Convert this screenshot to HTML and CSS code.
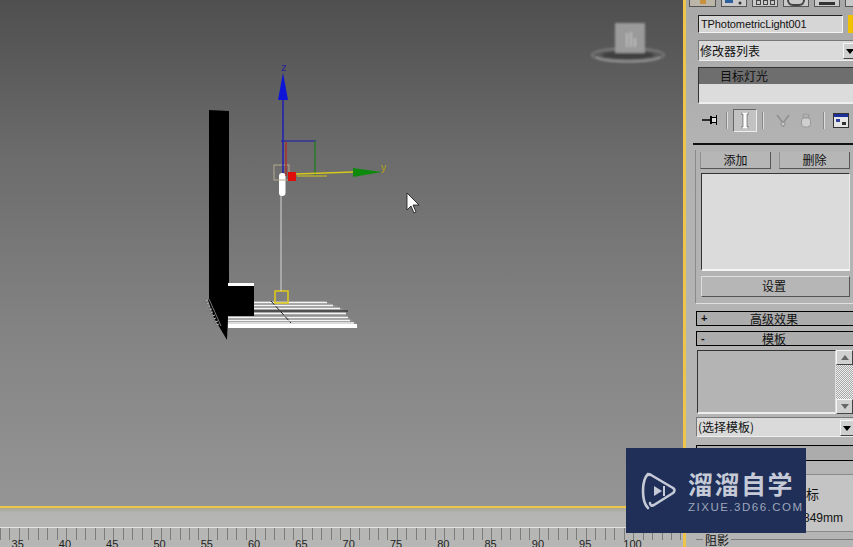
FILE: index.html
```html
<!DOCTYPE html>
<html lang="zh">
<head>
<meta charset="utf-8">
<title>3ds Max</title>
<link rel="stylesheet" href="styles.css">
</head>
<body>
<div class="app">
  <div class="left">
    <main class="viewport">
      <svg class="scene" width="683" height="506" viewBox="0 0 683 506" xmlns="http://www.w3.org/2000/svg">
        <defs><filter id="soft"><feGaussianBlur stdDeviation="0.45"/></filter><filter id="softer"><feGaussianBlur stdDeviation="1"/></filter></defs>
        <g filter="url(#softer)">
          <ellipse cx="628" cy="55" rx="36" ry="6.500" fill="none" stroke="#7f7f7f" stroke-width="1.800"/>
          <path d="M596 57c10 6 54 6 64 0" fill="none" stroke="#a0a0a0" stroke-width="1.500"/>
          <ellipse cx="628" cy="55" rx="26" ry="4" fill="#3f3f3f"/>
          <rect x="615" y="23" width="30" height="30" rx="1" fill="#9a9a9a"/>
          <path d="M627 33v14M631 32v15M635 38v9" stroke="#c4c4c4" stroke-width="1.500" fill="none"/>
        </g>
        <g filter="url(#soft)">
          <path d="M254 301h70l10 4 8 3 6 9 9 7 1 4H228v-12h26z" fill="#8f8f8f"/>
          <g stroke="#f4f4f4" stroke-width="1.600" fill="none">
            <path d="M254 302.500h73M254 305.500h79M254 308.500h86M254 313.500h92"/>
            <path d="M228 317.500h120M228 320.500h122M228 323h126"/>
          </g>
          <path d="M228 326h129" stroke="#fff" stroke-width="4"/>
          <path d="M254 311h94" stroke="#111" stroke-width="1"/>
          <path d="M271 301l20 22" stroke="#222" stroke-width="1" stroke-dasharray="5 2"/>
          <path d="M209 110l20 1v172h25v33h-26l-1 24-13-22-6-18 1-1z" fill="#000"/>
          <rect x="228" y="283" width="26" height="3" fill="#fff"/>
          <path d="M205 301l3-1M206 304l3-1M207 307l3-1M209 310l3-1M210 313l3-1M212 316l3-1M213 319l3-1M215 322l3-1M216 325l3-1" stroke="#b0b0b0" stroke-width="1"/>
          <path d="M205 300l12 27M209 299l12 27" stroke="#777" stroke-width="1"/>
          <rect x="275" y="291" width="13" height="12" fill="none" stroke="#dcc81c" stroke-width="1.600"/>
          <path d="M281 194v97" stroke="#d4d4d4" stroke-width="1"/>
          <rect x="279" y="173" width="6.500" height="23" rx="3.200" fill="#fff"/>
          <rect x="274" y="165" width="15" height="15" fill="none" stroke="#b3a98e" stroke-width="1"/>
          <path d="M283 100v73" stroke="#1010c0" stroke-width="1.300"/>
          <path d="M283 73l-5 27h10z" fill="#0a14d8"/>
          <text x="284" y="71" class="axis axis-z">z</text>
          <path d="M281 141h35" stroke="#1818b0" stroke-width="1.200"/>
          <path d="M315 141v34" stroke="#2a7a2a" stroke-width="1.500"/>
          <path d="M286 142v34" stroke="#b52525" stroke-width="1.300"/>
          <rect x="288" y="172" width="8" height="9" fill="#e01010"/>
          <path d="M296 174l57-2" stroke="#d4c81a" stroke-width="1.400"/>
          <path d="M297 176h30" stroke="#d4c81a" stroke-width="1"/>
          <path d="M353 168l29 4-29 5z" fill="#0f8a0f"/>
          <text x="381" y="171" class="axis axis-y">y</text>
          <path d="M407 193v17l4-4 3 7 2-1-3-7h6z" fill="#fff" stroke="#111" stroke-width="0.800"/>
        </g>
      </svg>
    </main>
    <div class="track-band"></div>
    <div class="ruler">
      <span class="tick-label">35</span><span class="tick-label">40</span><span class="tick-label">45</span><span class="tick-label">50</span><span class="tick-label">55</span><span class="tick-label">60</span><span class="tick-label">65</span><span class="tick-label">70</span><span class="tick-label">75</span><span class="tick-label">80</span><span class="tick-label">85</span><span class="tick-label">90</span><span class="tick-label">95</span><span class="tick-label">100</span>
    </div>
  </div>

  <aside class="panel">
    <div class="tabs">
      <span class="tab tab-a"><i class="dot"></i></span>
      <span class="tab tab-b"><svg width="24" height="7" viewBox="0 0 24 7"><path d="M3 0h8v3H3z" fill="#2b5f9e"/><circle cx="18" cy="3" r="1.500" fill="#333"/></svg></span>
      <span class="tab tab-c"><i class="sq"></i><i class="sq"></i><i class="sq"></i></span>
      <span class="tab tab-d"><i class="ring"></i></span>
      <span class="tab tab-e"><i class="bar"></i></span>
      <span class="tab tab-f"></span>
    </div>

    <div class="name-row">
      <div class="name-input">TPhotometricLight001</div>
      <div class="swatch"></div>
    </div>

    <div class="combo">
      <span>修改器列表</span>
      <span class="combo-btn"><i class="arrow"></i></span>
    </div>

    <div class="stack">
      <div class="stack-sel">目标灯光</div>
    </div>

    <div class="tools">
      <svg class="tool tool-pin" width="18" height="14" viewBox="0 0 18 14"><path d="M1 7h8" stroke="#000" stroke-width="1.500"/><path d="M9 3h2v1h4V2h1v10h-1v-2h-4v1H9z" fill="#000"/><rect x="11" y="5" width="4" height="4" fill="#ddd"/></svg>
      <i class="tool-sep"></i>
      <span class="tool-active"><svg width="8" height="17" viewBox="0 0 8 17"><path d="M0 0h8v2H6v13h2v2H0v-2h2V2H0z" fill="#fff" stroke="#333" stroke-width="0.500"/></svg></span>
      <i class="tool-sep"></i>
      <svg class="tool tool-y" width="16" height="15" viewBox="0 0 16 15"><path d="M2 2l6 8 6-8M8 10v4" fill="none" stroke="#8f8f8f" stroke-width="1.500"/><circle cx="8" cy="11" r="2" fill="#c8c8c8" stroke="#8f8f8f"/></svg>
      <svg class="tool tool-can" width="12" height="15" viewBox="0 0 12 15"><ellipse cx="6" cy="3" rx="3" ry="2" fill="none" stroke="#9a9a9a" stroke-width="1.200"/><rect x="1.500" y="5" width="9" height="9" rx="3" fill="#cfcfcf" stroke="#9a9a9a"/></svg>
      <i class="tool-sep"></i>
      <svg class="tool tool-cfg" width="16" height="15" viewBox="0 0 16 15"><rect x="0.500" y="0.500" width="15" height="14" fill="#e6e6e6" stroke="#333"/><rect x="1" y="1" width="14" height="3" fill="#1c2f9a"/><rect x="3" y="6" width="4" height="3" fill="#2e3f9e"/><rect x="9" y="9" width="4" height="3" fill="#333"/></svg>
    </div>

    <div class="divider"></div>

    <section class="group">
      <div class="btn-row">
        <div class="btn btn-flat">添加</div>
        <div class="btn btn-flat">删除</div>
      </div>
      <div class="listbox"></div>
      <div class="btn btn-setup">设置</div>
    </section>

    <div class="rollout rollout-first"><span class="sign">+</span><span class="roll-title">高级效果</span></div>
    <div class="rollout"><span class="sign">-</span><span class="roll-title">模板</span></div>

    <div class="tpl">
      <div class="tpl-box"></div>
      <div class="scroll">
        <span class="scroll-btn"><i class="up"></i></span>
        <span class="scroll-track"></span>
        <span class="scroll-btn"><i class="down"></i></span>
      </div>
    </div>

    <div class="combo combo-tpl">
      <span>(选择模板)</span>
      <span class="combo-btn"><i class="arrow"></i></span>
    </div>

    <div class="rollout rollout-blank"></div>
    <div class="coord">
      <div class="coord-title">标</div>
      <div class="coord-val">849mm</div>
    </div>
    <div class="shadow-title"><span>阻影</span></div>
  </aside>

  <div class="brand">
    <svg class="brand-icon" width="36" height="38" viewBox="0 0 36 38"><path d="M7 2C3 6 2 12 2 19s1 13 5 17" fill="none" stroke="#c5cad6" stroke-width="2.600" stroke-linecap="round"/><path d="M8 3c0-1 1-1 2 0l22 13c2 1 2 3 0 5L13 33c-2 1-4 1-4-2" fill="none" stroke="#c5cad6" stroke-width="2.600" stroke-linecap="round" stroke-linejoin="round"/><path d="M13 14l8 5-8 5z" fill="#c5cad6"/><path d="M23 14v10" stroke="#c5cad6" stroke-width="2"/></svg>
    <div class="brand-text">
      <div class="brand-cn">溜溜自学</div>
      <div class="brand-en">ZIXUE.3D66.COM</div>
    </div>
  </div>
</div>
</body>
</html>
```

FILE: styles.css
```css
* { box-sizing: border-box; }
html, body { margin: 0; padding: 0; }
body { width: 853px; height: 547px; overflow: hidden; background: #b4b4b4; font-family: "Noto Sans CJK SC", "Liberation Sans", sans-serif; color: #111; }
i { display: block; }

.app { position: relative; display: flex; width: 853px; height: 547px; overflow: hidden; }

.left { width: 683px; flex: none; display: flex; flex-direction: column; }
.viewport { height: 506px; flex: none; background: linear-gradient(180deg, #4f4f4f 0%, #6b6b6b 30%, #838383 65%, #959595 100%); }
.scene { display: block; }
.axis { font-family: "Liberation Sans", sans-serif; font-size: 11px; }
.axis-z { fill: #2020a0; text-anchor: middle; }
.axis-y { fill: #b5a01a; }

.track-band { height: 21px; flex: none; border-top: 2px solid #eec64a; background: linear-gradient(180deg, #a8a795 0%, #b4b4b2 25%, #b6b6b4 100%); }
.ruler { height: 20px; flex: none; border-top: 1px solid #e4e4e4; display: flex; align-items: flex-end; background-color: #b6b6b4; background-image: repeating-linear-gradient(90deg, #7c7c7c 0, #7c7c7c 1px, transparent 1px, transparent 9.45px); background-size: 100% 12px; background-repeat: no-repeat; overflow: hidden; }
.tick-label { width: 47.3px; flex: none; font-family: "Liberation Sans", sans-serif; font-size: 11px; line-height: 8px; height: 7px; text-align: center; color: #222; }
.tick-label:first-child { margin-left: -6px; }

.panel { width: 170px; flex: none; height: 547px; overflow: hidden; border-left: 3px solid #efc44b; background: linear-gradient(180deg, #a8a8a8 0%, #b2b2b2 25%, #b5b5b5 100%); padding-left: 12px; }

.tabs { display: flex; height: 8px; gap: 5px; margin-left: -9px; align-items: flex-start; }
.tab { height: 7px; flex: none; display: flex; gap: 2px; justify-content: center; background: #c9c9c9; border: 1px solid #555; border-top: 0; }
.tab-a { width: 27px; background: #bcb6a8; }
.dot { width: 6px; height: 4px; background: #c9913e; }
.tab-b { width: 26px; padding: 0; }
.tab-c { width: 26px; }
.sq { width: 5px; height: 5px; border: 1px solid #444; }
.tab-d { width: 26px; }
.ring { width: 18px; height: 6px; border: 2px solid #444; border-top: 0; border-radius: 0 0 9px 9px; }
.tab-e { width: 26px; }
.bar { width: 16px; height: 3px; margin-top: 2px; background: #333; }
.tab-f { width: 20px; }

.name-row { display: flex; gap: 5px; margin-top: 7px; height: 18px; }
.name-input { width: 145px; flex: none; background: #d6d6d6; border: 1px solid; border-color: #222 #f2f2f2 #f2f2f2 #222; font-family: "Liberation Sans", sans-serif; font-size: 11px; letter-spacing: -0.1px; line-height: 16px; padding-left: 2px; white-space: nowrap; overflow: hidden; }
.swatch { width: 10px; flex: none; background: #f2c200; }

.combo { display: flex; justify-content: space-between; width: 160px; height: 21px; margin-top: 7px; background: #dadada; border: 1px solid; border-color: #777 #eee #eee #777; font-size: 12px; line-height: 19px; padding-left: 1px; overflow: hidden; }
.combo-btn { width: 14px; flex: none; display: flex; align-items: center; justify-content: center; height: 16px; margin-top: 2px; background: #cfcfcf; border: 1px solid; border-color: #f5f5f5 #444 #444 #f5f5f5; }
.arrow { width: 0; height: 0; border-left: 4px solid transparent; border-right: 4px solid transparent; border-top: 5px solid #000; }

.stack { width: 160px; height: 37px; margin-top: 6px; background: #dcdcdc; border: 1px solid; border-color: #333 #eee #eee #333; border-bottom-width: 2px; overflow: hidden; }
.stack-sel { height: 16px; background: #6e6e6e; padding-left: 21px; font-size: 12px; line-height: 16px; color: #0e0e0e; }

.tools { display: flex; align-items: center; height: 26px; margin-top: 3px; margin-left: 3px; }
.tool { flex: none; }
.tool-pin { margin-right: 7px; }
.tool-sep { width: 2px; height: 17px; background: #888; border-right: 1px solid #ddd; flex: none; }
.tool-active { width: 24px; height: 23px; margin: 0 5px; display: flex; align-items: center; justify-content: center; background: #c2c2c2; border: 1px solid; border-color: #666 #eee #eee #666; flex: none; }
.tool-y { margin: 0 9px 0 11px; }
.tool-can { margin-right: 11px; }
.tool-sep + .tool-cfg { margin-left: 8px; }

.divider { height: 2px; margin: 10px 0 0 -5px; background: #111; width: 170px; }

.group { margin: 5px 0 0 -3px; width: 170px; height: 154px; border: 1px solid; border-color: #8a8a8a; border-top: 0; border-right: 0; border-bottom-color: #e0e0e0; padding: 0 0 0 5px; }
.btn-row { display: flex; gap: 8px; padding-top: 2px; height: 21px; margin-left: -1px; }
.btn { text-align: center; font-size: 12px; background: #b6b6b6; }
.btn-flat { width: 71px; height: 17px; line-height: 15px; border: 1px solid; border-color: #8f8f8f #555 #555 #8f8f8f; border-top: 0; }
.listbox { width: 149px; height: 98px; margin-top: 2px; background: #dbdbdb; border: 1px solid; border-color: #333 #eee #f4f4f4 #333; border-bottom-width: 2px; }
.btn-setup { width: 149px; height: 21px; margin-top: 5px; padding-right: 3px; line-height: 18px; border: 1px solid; border-color: #ddd #555 #555 #ddd; }

.rollout { display: flex; width: 157px; height: 15px; margin-left: -2px; align-items: center; border: 1px solid #000; border-right: 0; background: #acacac; font-size: 12px; line-height: 13px; }
.rollout-first { margin-top: 7px; }
.rollout + .rollout { margin-top: 5px; }
.sign { width: 12px; flex: none; padding-left: 4px; font-family: "Liberation Sans", sans-serif; font-weight: bold; font-size: 11px; }
.roll-title { flex: 1; text-align: center; padding-right: 14px; }

.tpl { display: flex; margin-top: 4px; margin-left: -1px; width: 156px; height: 64px; }
.tpl-box { width: 139px; flex: none; background: #b4b4b4; border: 1px solid; border-color: #333 #ddd #eee #333; border-bottom-width: 2px; }
.scroll { width: 17px; flex: none; display: flex; flex-direction: column; }
.scroll-btn { height: 15px; flex: none; display: flex; align-items: center; justify-content: center; background: #d0d0d0; border: 1px solid; border-color: #f5f5f5 #444 #444 #f5f5f5; }
.scroll-track { flex: 1; background-color: #d8d8d8; background-image: repeating-conic-gradient(#eee 0 25%, #a8a8a8 0 50%); background-size: 2px 2px; }
.up { width: 0; height: 0; border-left: 4px solid transparent; border-right: 4px solid transparent; border-bottom: 5px solid #666; }
.down { width: 0; height: 0; border-left: 4px solid transparent; border-right: 4px solid transparent; border-top: 5px solid #666; }

.combo-tpl { margin-top: 3px; margin-left: -2px; width: 159px; height: 20px; line-height: 18px; }

.rollout-blank { margin-top: 8px; height: 16px; }
.coord { width: 156px; height: 58px; margin-top: 13px; margin-left: 4px; padding: 10px 0 0 93px; background: #c4c4c4; border: 1px solid #8a8a8a; overflow: hidden; }
.coord-title { font-size: 13px; line-height: 18px; padding-left: 10px; }
.coord-val { font-family: "Liberation Sans", sans-serif; font-size: 12px; line-height: 14px; margin-top: 8px; margin-left: 7px; }
.shadow-title { margin-top: 1px; margin-left: -2px; height: 14px; font-size: 12px; line-height: 14px; padding-left: 7px; background: linear-gradient(#7d7d7d, #7d7d7d) 0 6px / 100% 1px no-repeat; }
.shadow-title span { background: #b5b5b5; padding: 0 2px; }

.brand { position: absolute; left: 626px; top: 448px; width: 180px; height: 85px; background: #1f2f58; display: flex; align-items: center; padding-left: 15px; gap: 11px; }
.brand-icon { flex: none; }
.brand-text { display: flex; flex-direction: column; }
.brand-cn { font-size: 25px; font-weight: 700; line-height: 30px; letter-spacing: 1.5px; color: #c5cad6; white-space: nowrap; }
.brand-en { font-family: "Liberation Sans", sans-serif; font-size: 11.500px; line-height: 14px; letter-spacing: 1.500px; color: #9ea6ba; white-space: nowrap; margin-top: 2px; }
```
